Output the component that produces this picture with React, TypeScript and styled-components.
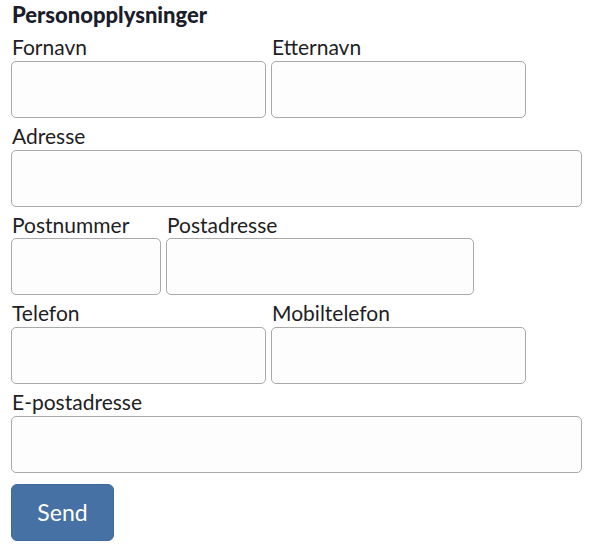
import React from "react";
import styled, { createGlobalStyle } from "styled-components";

const Global = createGlobalStyle`
  html, body { margin: 0; padding: 0; background: #ffffff; }
  body { font-family: Lato, "Open Sans", sans-serif; color: #1e1e24; }
`;

const Form = styled.form`
  display: flex;
  flex-direction: column;
  gap: 5px;
  padding: 1px 0 0 11px;
`;

const Heading = styled.h2`
  margin: 0;
  font-size: 22px;
  font-weight: 900;
  line-height: 28px;
  color: #1b1d2b;
  padding-left: 1px;
`;

const Row = styled.div`
  display: flex;
  gap: 5px;
`;

const Field = styled.div<{ $w: number }>`
  display: flex;
  flex-direction: column;
  width: ${(p) => p.$w}px;
`;

const Label = styled.label`
  font-size: 21px;
  line-height: 26.75px;
  padding-left: 1px;
  color: #1e1e24;
  white-space: nowrap;
`;

const Input = styled.input`
  box-sizing: border-box;
  height: 57px;
  width: 100%;
  margin: 0;
  border: 1px solid #a9a9a9;
  border-radius: 5px;
  background: #fdfdfd;
  font: inherit;
  font-size: 20px;
  padding: 0 10px;
`;

const Button = styled.button`
  margin-top: 6px;
  width: 103px;
  height: 57px;
  border: 1px solid #3f6a9d;
  border-radius: 6px;
  background: #4671a5;
  color: #ffffff;
  font-family: Lato, "Open Sans", sans-serif;
  font-size: 23px;
  cursor: pointer;
`;

const fields: { label: string; w: number }[][] = [
  [
    { label: "Fornavn", w: 255 },
    { label: "Etternavn", w: 255 },
  ],
  [{ label: "Adresse", w: 571 }],
  [
    { label: "Postnummer", w: 150 },
    { label: "Postadresse", w: 308 },
  ],
  [
    { label: "Telefon", w: 255 },
    { label: "Mobiltelefon", w: 255 },
  ],
  [{ label: "E-postadresse", w: 571 }],
];

export default function App() {
  return (
    <>
      <Global />
      <Form onSubmit={(e) => e.preventDefault()}>
        <Heading>Personopplysninger</Heading>
        {fields.map((row, i) => (
          <Row key={i}>
            {row.map((f) => (
              <Field key={f.label} $w={f.w}>
                <Label>{f.label}</Label>
                <Input type="text" />
              </Field>
            ))}
          </Row>
        ))}
        <div>
          <Button type="submit">Send</Button>
        </div>
      </Form>
    </>
  );
}
